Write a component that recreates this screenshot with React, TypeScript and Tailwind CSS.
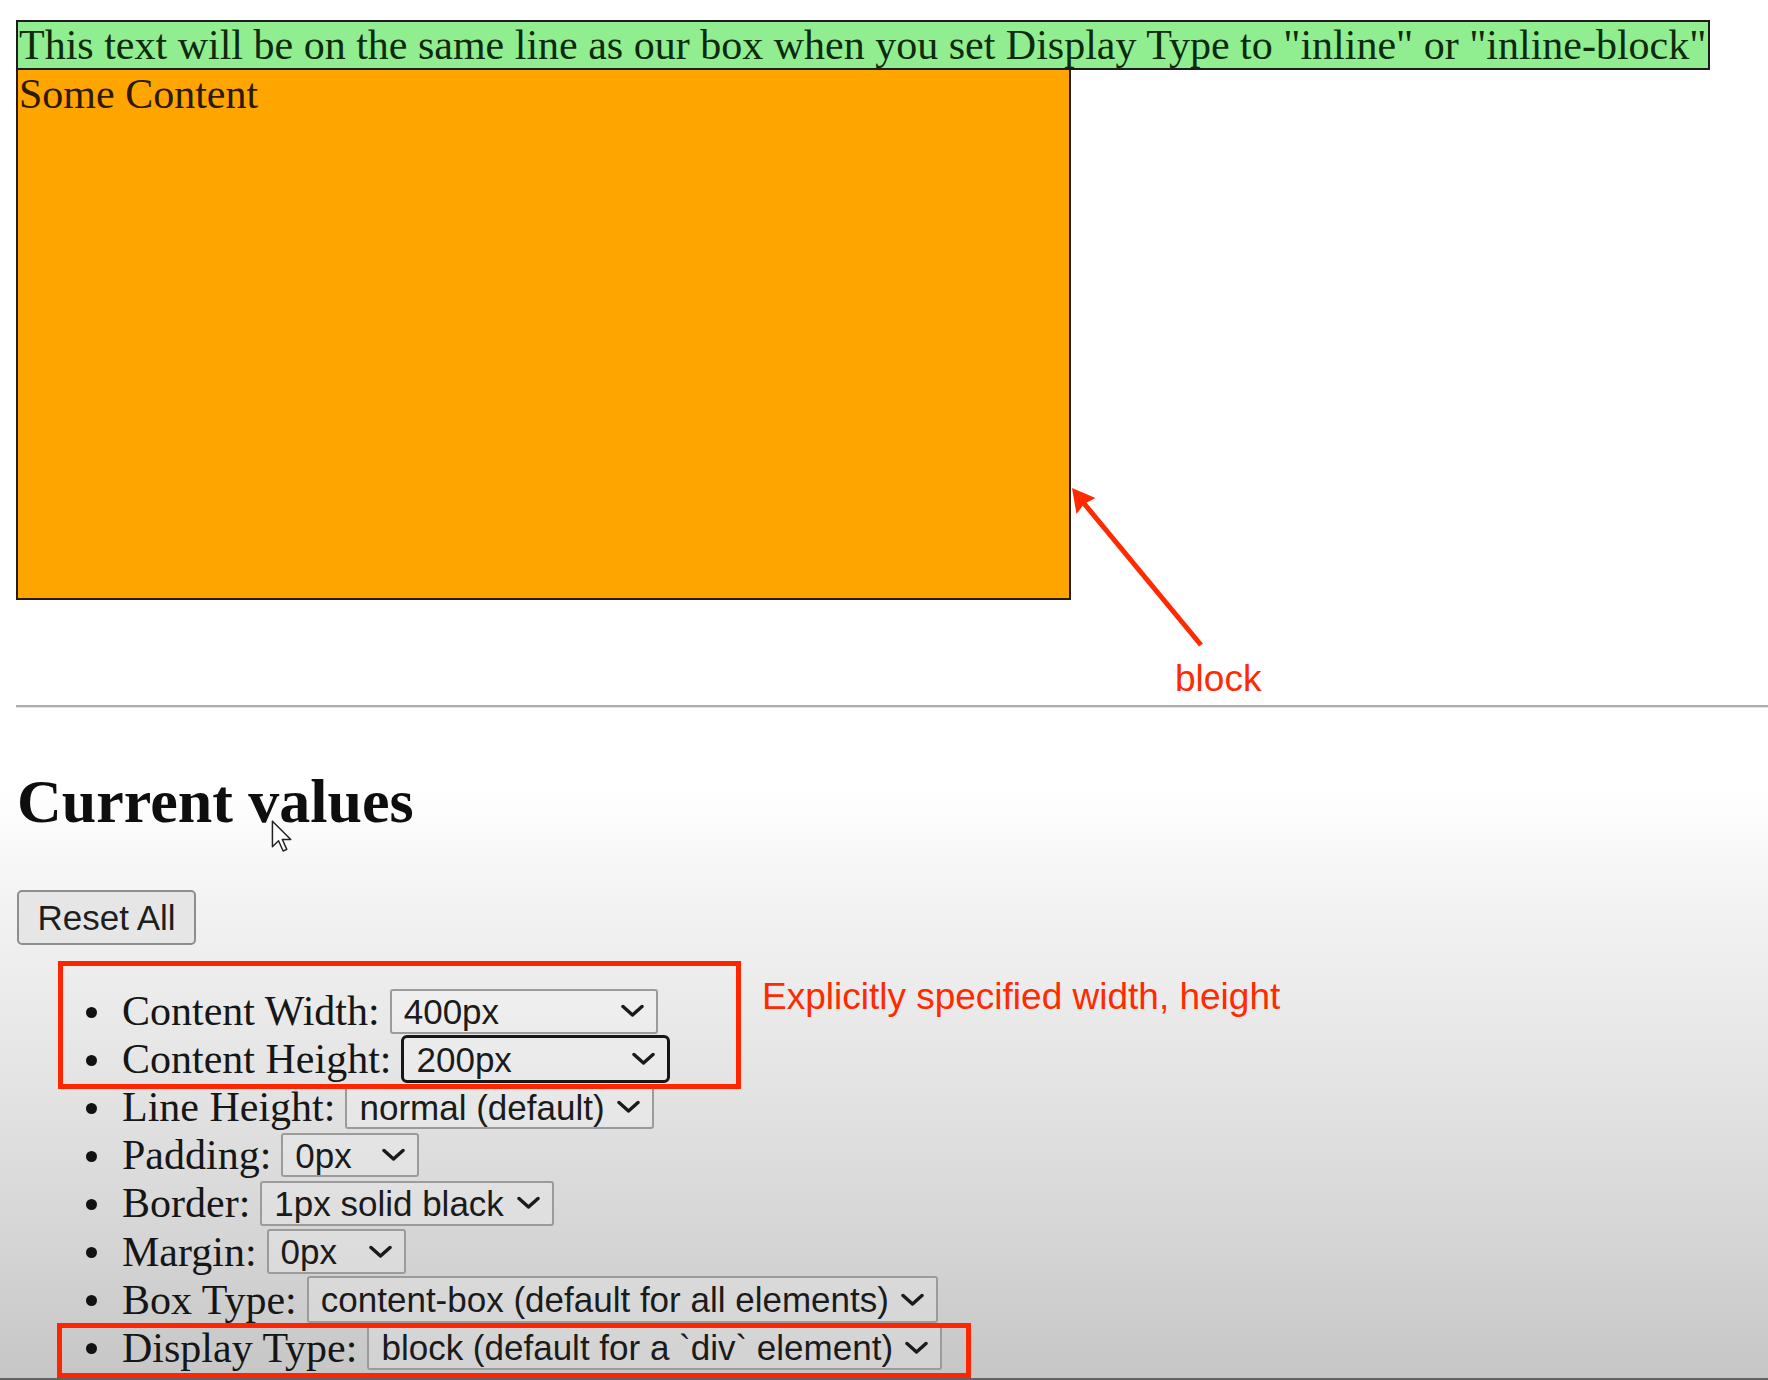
const rows = [
  { label: "Content Width:", value: "400px", w: "w-[268px]", h: "h-[45px]", focused: false },
  { label: "Content Height:", value: "200px", w: "w-[269px]", h: "h-[48px]", focused: true },
  { label: "Line Height:", value: "normal (default)", w: "w-[309px]", h: "h-[44px]", focused: false },
  { label: "Padding:", value: "0px", w: "w-[138px]", h: "h-[44px]", focused: false },
  { label: "Border:", value: "1px solid black", w: "w-[294px]", h: "h-[45px]", focused: false },
  { label: "Margin:", value: "0px", w: "w-[139px]", h: "h-[45px]", focused: false },
  { label: "Box Type:", value: "content-box (default for all elements)", w: "w-[631px]", h: "h-[47px]", focused: false },
  { label: "Display Type:", value: "block (default for a `div` element)", w: "w-[575px]", h: "h-[45px]", focused: false },
]

const Chevron = () => (
  <svg width="23" height="14" viewBox="0 0 23 14" className="shrink-0">
    <polyline points="2,2.5 11.5,11 21,2.5" fill="none" stroke="#1a1a1a" strokeWidth="3.4" strokeLinecap="round" strokeLinejoin="round" />
  </svg>
)

const FakeSelect = ({ value, w, h, focused }: { value: string; w: string; h: string; focused: boolean }) => (
  <span
    className={`ml-[10px] inline-flex items-center justify-between px-[12px] bg-white/20 font-['Liberation_Sans',Arial,sans-serif] text-[35px] leading-none text-[#1b1b1b] ${w} ${h} ${
      focused ? "rounded-[6px] border-[3px] border-[#161616]" : "rounded-[3px] border-2 border-[#9b9b9b]"
    }`}
  >
    <span className="whitespace-nowrap">{value}</span>
    <Chevron />
  </span>
)

export default function App() {
  return (
    <div className="relative h-[1380px] w-full overflow-hidden border-b-2 border-[#626262] bg-[linear-gradient(to_bottom,#ffffff_0px,#ffffff_790px,#f3f3f3_900px,#e4e4e4_1080px,#d4d4d4_1250px,#c6c6c6_1378px)] font-['Liberation_Serif',serif] text-[#111]">
      <div className="pl-[16px] pt-[20px]">
        {/* green line */}
        <div className="inline-block h-[50px] border-2 border-[#1c1c1c] bg-[#90ee90] pl-[1px] pr-[2px] text-[42px] leading-[46px] whitespace-nowrap text-[#0d2a0d]">
          This text will be on the same line as our box when you set Display Type to "inline" or "inline-block"
        </div>

        {/* the box */}
        <div className="-mt-[2px] h-[532px] w-[1055px] border-2 border-[#2a1a0a] bg-[#ffa500] pl-[1px] text-[42px] leading-[48px] text-[#2d1800]">
          Some Content
        </div>
      </div>

      <div className="ml-[16px] mt-[105px]">
        <div className="h-[2px] bg-[#acacac]" />
        <div className="h-[1px] bg-[#e2e2e2]" />
      </div>

      <div className="pl-[17px]">
        <h2 className="mt-[58px] text-[62px] font-bold leading-[70px] text-[#0e0e0e]">Current values</h2>

        <button className="mt-[54px] h-[55px] w-[179px] rounded-[5px] border-2 border-[#8e8e8e] bg-[#e6e6e6] font-['Liberation_Sans',Arial,sans-serif] text-[35px] text-[#1e1e1e]">
          Reset All
        </button>

        <div className="mt-[42px] flex flex-col">
          {rows.map((r) => (
            <div key={r.label} className="flex h-[48.1px] items-center">
              <span className="ml-[69px] mt-[2px] h-[11px] w-[11px] rounded-full bg-[#111]" />
              <span className="ml-[25px] whitespace-nowrap text-[42px] leading-[48px] text-[#161616]">{r.label}</span>
              <FakeSelect value={r.value} w={r.w} h={r.h} focused={r.focused} />
            </div>
          ))}
        </div>
      </div>

      {/* annotations */}
      <svg className="absolute left-[1060px] top-[478px]" width="160" height="180" viewBox="0 0 160 180">
        <line x1="22" y1="23" x2="141" y2="167" stroke="#ff2a00" strokeWidth="5" />
        <polygon points="12,10 16.5,36 24,26 35.5,20" fill="#ff2a00" />
      </svg>
      <span className="absolute left-[1175px] top-[660px] font-['Liberation_Sans',Arial,sans-serif] text-[37px] leading-none text-[#ff2a00]">
        block
      </span>

      <div className="absolute left-[58px] top-[961px] h-[128px] w-[683px] border-[5px] border-[#ff2500]" />
      <span className="absolute left-[762px] top-[978px] font-['Liberation_Sans',Arial,sans-serif] text-[37px] leading-none text-[#ff2a00]">
        Explicitly specified width, height
      </span>
      <div className="absolute left-[57px] top-[1323px] h-[55px] w-[914px] border-[5px] border-[#ff2500]" />

      {/* mouse pointer */}
      <svg className="absolute left-[271px] top-[820px]" width="22" height="33" viewBox="0 0 13 20">
        <path d="M0.7 0.7 V16.2 L4.4 12.6 L7.2 18.8 L9.4 17.8 L6.7 11.8 H11.8 Z" fill="#fff" stroke="#222" strokeWidth="0.9" strokeLinejoin="round" />
      </svg>
    </div>
  )
}
